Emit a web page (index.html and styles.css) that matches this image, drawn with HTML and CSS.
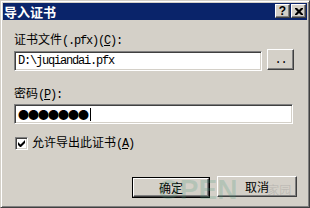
FILE: index.html
```html
<!DOCTYPE html>
<html>
<head>
<meta charset="utf-8">
<link rel="stylesheet" href="styles.css">
</head>
<body>
<div class="win">
  <div class="title">
    <span class="title-text">导入证书</span>
    <div class="caps">
      <span class="cap raised help">?</span>
      <span class="cap raised close"><svg width="8" height="7" viewBox="0 0 8 7"><path d="M0 0h2l2 2 2-2h2v1l-2.5 2.5L8 6v1H6L4 5 2 7H0V6l2.5-2.5L0 1z" fill="#000"/></svg></span>
    </div>
  </div>
  <div class="body">
    <div class="label l1">证书文件<span class="a">(.pfx)(<u>C</u>):</span></div>
    <div class="row1">
      <div class="field f1"><span class="a">D:\juqiandai.pfx</span></div>
      <div class="btn raised browse"><span class="a">..</span></div>
    </div>
    <div class="label l2">密码<span class="a">(<u>P</u>):</span></div>
    <div class="field f2"><span class="dots">●●●●●●●</span><span class="caret"></span></div>
    <div class="check">
      <span class="box"><svg width="7" height="7" viewBox="0 0 7 7"><path d="M0 2v3l2 2h1l4-4V0L2.5 4.5z" fill="#000"/></svg></span>
      <span class="check-text">允许导出此证书<span class="a">(<u>A</u>)</span></span>
    </div>
    <div class="buttons">
      <div class="defwrap"><div class="btn raised ok">确定</div></div>
      <div class="btn raised cancel">取消</div>
    </div>
  </div>
  <div class="wm"><span class="wm-open">OPEN</span><span class="wm-cn">家园</span></div>
</div>
</body>
</html>
```
FILE: styles.css
```css
html, body {
  margin: 0;
  padding: 0;
  background: #d4d0c8;
}
.win {
  position: relative;
  box-sizing: border-box;
  width: 310px;
  height: 208px;
  background: #d4d0c8;
  border: 1px solid;
  border-color: #d4d0c8 #404040 #404040 #d4d0c8;
  box-shadow: inset 1px 1px #fff, inset -1px -1px #808080;
  padding: 2px;
  font-family: "Noto Sans CJK SC", sans-serif;
  font-size: 12px;
  color: #000;
  overflow: hidden;
}
.title {
  height: 17px;
  background: #0a246a;
  display: flex;
  align-items: flex-start;
  justify-content: space-between;
}
.title-text {
  color: #fff;
  font-weight: bold;
  font-size: 13px;
  line-height: 17px;
  padding-left: 1px;
}
.caps {
  display: flex;
  gap: 1px;
  margin-top: 1px;
  padding-right: 1px;
}
.raised {
  box-sizing: border-box;
  background: #d4d0c8;
  border: 1px solid;
  border-color: #fff #404040 #404040 #fff;
  box-shadow: inset -1px -1px #808080;
}
.cap {
  width: 15px;
  height: 14px;
  display: flex;
  align-items: center;
  justify-content: center;
}
.help {
  font-family: "Liberation Sans", sans-serif;
  font-weight: bold;
  font-size: 12px;
  line-height: 12px;
}
.body {
  display: flex;
  flex-direction: column;
  padding-left: 11px;
}
.a {
  font-family: "Liberation Mono", monospace;
  letter-spacing: -1.2px;
}
.label {
  line-height: 12px;
  height: 12px;
}
.l1 { margin-top: 13px; }
.row1 {
  margin-top: 4px;
  display: flex;
  align-items: flex-start;
  gap: 5px;
}
.field {
  box-sizing: border-box;
  background: #fff;
  border: 1px solid;
  border-color: #808080 #fff #fff #808080;
  box-shadow: inset 1px 1px #404040, inset -1px -1px #d4d0c8;
  padding-left: 3px;
  display: flex;
  align-items: center;
}
.f1 {
  width: 248px;
  height: 20px;
  margin-top: 2px;
}
.browse {
  width: 27px;
  height: 21px;
  display: flex;
  align-items: center;
  justify-content: center;
}
.l2 { margin-top: 16px; }
.f2 {
  width: 279px;
  height: 20px;
  margin-top: 5px;
}
.dots {
  font-size: 11px;
  line-height: 12px;
  letter-spacing: -1px;
}
.caret {
  width: 1px;
  height: 13px;
  background: #000;
  margin-left: 2px;
}
.check {
  margin-top: 11px;
  display: flex;
  align-items: center;
  gap: 4px;
  padding-left: 1px;
}
.box {
  box-sizing: border-box;
  width: 13px;
  height: 13px;
  background: #fff;
  border: 1px solid;
  border-color: #808080 #fff #fff #808080;
  box-shadow: inset 1px 1px #404040, inset -1px -1px #d4d0c8;
  display: flex;
  align-items: center;
  justify-content: center;
}
.check-text {
  line-height: 14px;
}
.buttons {
  margin-top: 25px;
  display: flex;
  gap: 7px;
  padding-left: 118px;
  align-items: flex-start;
}
.defwrap {
  border: 1px solid #000;
  margin-top: 1px;
}
.btn {
  display: flex;
  align-items: center;
  justify-content: center;
}
.ok {
  width: 76px;
  height: 19px;
}
.cancel {
  width: 80px;
  height: 21px;
}
.wm {
  position: absolute;
  left: 157px;
  top: 172px;
  height: 34px;
  display: flex;
  align-items: center;
  pointer-events: none;
}
.wm-open {
  font-family: "Liberation Sans", sans-serif;
  font-weight: bold;
  font-size: 28px;
  line-height: 34px;
  letter-spacing: 0;
  color: rgba(70, 150, 120, 0.22);
}
.wm-cn {
  font-size: 12px;
  line-height: 18px;
  color: rgba(120, 120, 120, 0.25);
  margin-left: 30px;
}
```
